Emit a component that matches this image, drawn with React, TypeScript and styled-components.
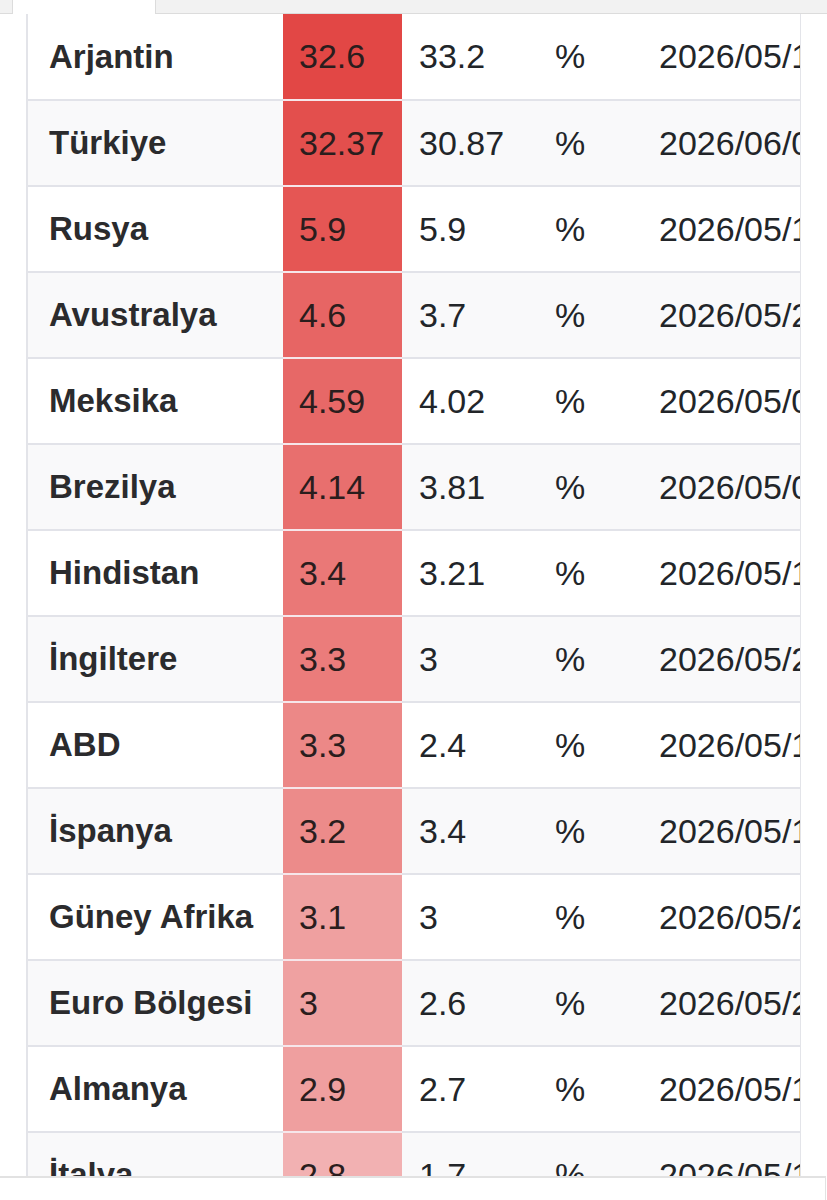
import React from "react";
import styled, { createGlobalStyle } from "styled-components";

type Row = {
  country: string;
  last: string;
  previous: string;
  unit: string;
  date: string;
  heat: string;
};

const rows: Row[] = [
  { country: "Arjantin", last: "32.6", previous: "33.2", unit: "%", date: "2026/05/14", heat: "#e24745" },
  { country: "Türkiye", last: "32.37", previous: "30.87", unit: "%", date: "2026/06/03", heat: "#e34f4d" },
  { country: "Rusya", last: "5.9", previous: "5.9", unit: "%", date: "2026/05/13", heat: "#e55654" },
  { country: "Avustralya", last: "4.6", previous: "3.7", unit: "%", date: "2026/05/27", heat: "#e76564" },
  { country: "Meksika", last: "4.59", previous: "4.02", unit: "%", date: "2026/05/07", heat: "#e76867" },
  { country: "Brezilya", last: "4.14", previous: "3.81", unit: "%", date: "2026/05/08", heat: "#e86f6e" },
  { country: "Hindistan", last: "3.4", previous: "3.21", unit: "%", date: "2026/05/12", heat: "#ea7877" },
  { country: "İngiltere", last: "3.3", previous: "3", unit: "%", date: "2026/05/20", heat: "#eb7c7b" },
  { country: "ABD", last: "3.3", previous: "2.4", unit: "%", date: "2026/05/13", heat: "#ec8887" },
  { country: "İspanya", last: "3.2", previous: "3.4", unit: "%", date: "2026/05/14", heat: "#ec8b8a" },
  { country: "Güney Afrika", last: "3.1", previous: "3", unit: "%", date: "2026/05/21", heat: "#efa0a0" },
  { country: "Euro Bölgesi", last: "3", previous: "2.6", unit: "%", date: "2026/05/29", heat: "#efa1a1" },
  { country: "Almanya", last: "2.9", previous: "2.7", unit: "%", date: "2026/05/13", heat: "#ef9f9f" },
  { country: "İtalya", last: "2.8", previous: "1.7", unit: "%", date: "2026/05/15", heat: "#f2b1b2" },
];

const App: React.FunctionComponent = () => {
  return (
    <>
      <GlobalStyle />
      <TabBar>
        <TabStub />
        <ActiveTab />
        <TabRest />
      </TabBar>
      <TableWrap>
        <Table>
          <colgroup>
            <col style={{ width: 255 }} />
            <col style={{ width: 119 }} />
            <col style={{ width: 136 }} />
            <col style={{ width: 104 }} />
            <col style={{ width: 220 }} />
          </colgroup>
          <tbody>
            {rows.map((row, i) => (
              <TableRow key={row.country} $striped={i % 2 === 1}>
                <NameCell>{row.country}</NameCell>
                <HeatCell $heat={row.heat}>{row.last}</HeatCell>
                <Cell>{row.previous}</Cell>
                <Cell>{row.unit}</Cell>
                <Cell>{row.date}</Cell>
              </TableRow>
            ))}
          </tbody>
        </Table>
      </TableWrap>
      <BottomPanel />
    </>
  );
};

const GlobalStyle = createGlobalStyle`
  html, body {
    margin: 0;
    background: #ffffff;
    font-family: "Liberation Sans", Arial, sans-serif;
    color: #222529;
  }
  body {
    overflow: hidden;
    height: 1200px;
  }
`;

const TabBar = styled.div`
  display: flex;
  height: 14px;
`;

const TabStub = styled.div`
  width: 13px;
  background: #f2f2f2;
  border-right: 1px solid #dcdcdc;
  border-bottom: 1px solid #dcdcdc;
  box-sizing: border-box;
`;

const ActiveTab = styled.div`
  width: 142px;
  background: #ffffff;
`;

const TabRest = styled.div`
  flex: 1;
  background: #f2f2f2;
  border-left: 1px solid #dcdcdc;
  border-bottom: 1px solid #dcdcdc;
  box-sizing: border-box;
`;

const TableWrap = styled.div`
  margin-left: 26px;
  width: 775px;
  height: 1186px;
  overflow: hidden;
  box-sizing: border-box;
  border-left: 2px solid #e3e4e9;
  border-right: 1px solid #e3e4e9;
`;

const Table = styled.table`
  table-layout: fixed;
  border-collapse: collapse;
  width: 834px;
`;

const TableRow = styled.tr<{ $striped: boolean }>`
  height: 86px;
  background: ${(p) => (p.$striped ? "#f9f9fa" : "#ffffff")};
  border-bottom: 2px solid #e2e3e9;
`;

const Cell = styled.td`
  padding: 0 0 0 17px;
  font-size: 34px;
  white-space: nowrap;
  overflow: hidden;
  vertical-align: middle;
  color: #222529;
`;

const NameCell = styled(Cell)`
  padding-left: 21px;
  font-weight: 700;
  font-size: 33px;
  color: #2b2b2d;
`;

const HeatCell = styled(Cell)<{ $heat: string }>`
  padding-left: 16px;
  background: ${(p) => p.$heat};
  border-bottom: 2px solid #f6e6ea;
  color: #2a1d1d;
`;

const BottomPanel = styled.div`
  position: fixed;
  left: 0;
  bottom: 0;
  width: 826px;
  height: 24px;
  box-sizing: border-box;
  background: #ffffff;
  border-top: 2px solid #e2e2e2;
  border-right: 1px solid #e2e2e2;
`;

export default App;
